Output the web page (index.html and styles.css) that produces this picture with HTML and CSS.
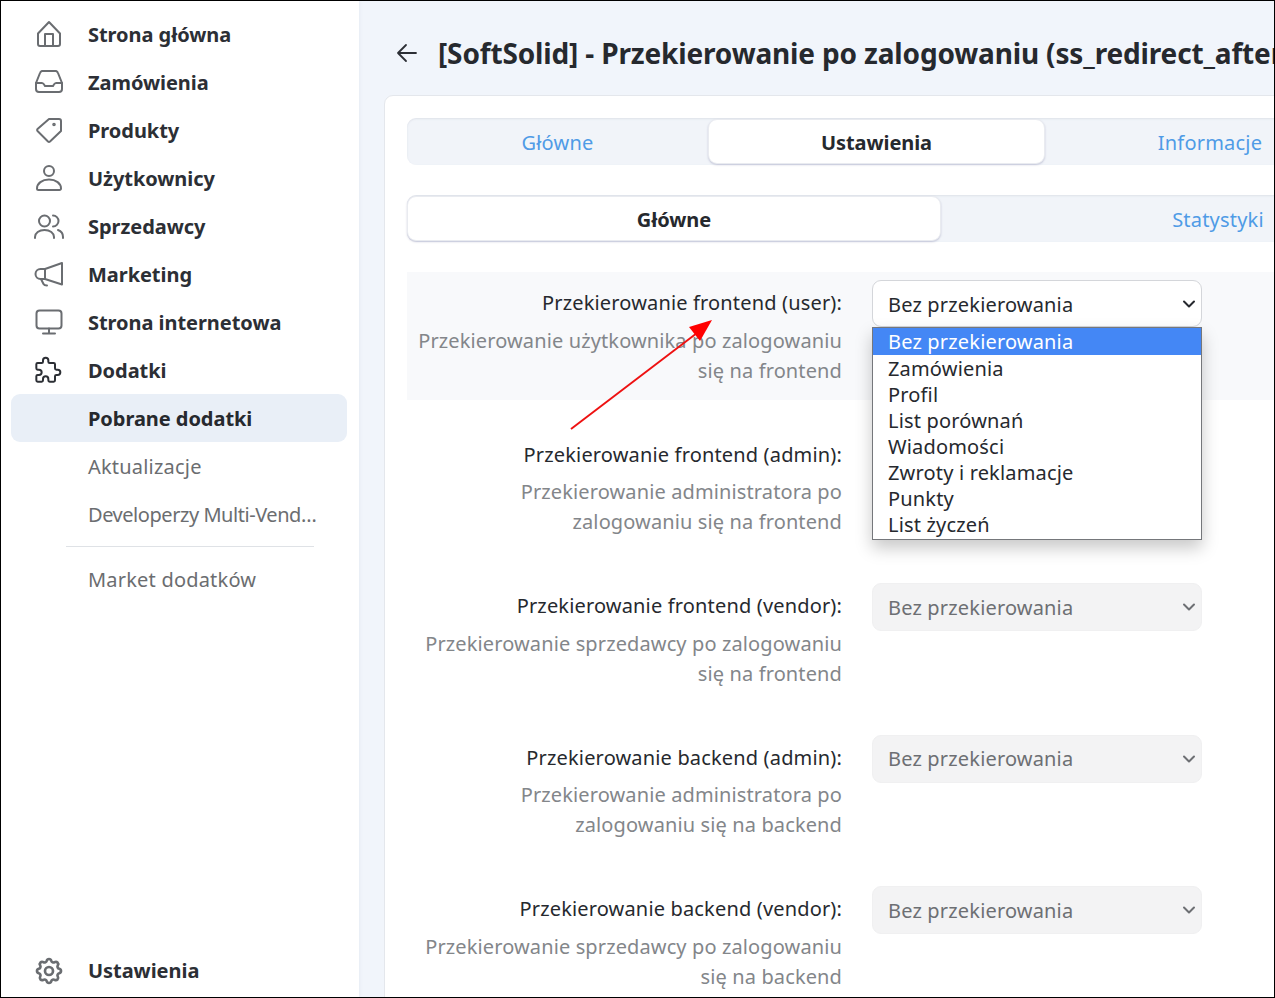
FILE: index.html
```html
<!DOCTYPE html>
<html lang="pl">
<head>
<meta charset="utf-8">
<title>Przekierowanie po zalogowaniu</title>
<link rel="stylesheet" href="styles.css">
</head>
<body>
<div class="frame">
  <aside class="sidebar">
    <nav class="nav">
      <a class="item"><svg class="ic" viewBox="0 0 32 32"><path d="M5 14.500 16 3l11 11.500V25a2 2 0 0 1-2 2H7a2 2 0 0 1-2-2Z"/><path d="M12 27V15h8v12"/></svg><span>Strona główna</span></a>
      <a class="item"><svg class="ic" viewBox="0 0 32 32"><path d="M3 16v6a3 3 0 0 0 3 3h20a3 3 0 0 0 3-3v-6L25 6a3 3 0 0 0-2-2H9a3 3 0 0 0-2 2Z"/><path d="M3 16h6c1.500 0 2 1 3 3h8c1-2 1.500-3 3-3h6"/></svg><span>Zamówienia</span></a>
      <a class="item"><svg class="ic" viewBox="0 0 32 32"><path d="M16 4h10a2 2 0 0 1 2 2v10L17 26.500a1.500 1.500 0 0 1-2 0L4.500 16a1.500 1.500 0 0 1 0-2Z"/><circle cx="21" cy="9.500" r=".8"/></svg><span>Produkty</span></a>
      <a class="item"><svg class="ic" viewBox="0 0 32 32"><circle cx="16" cy="8" r="5"/><path d="M4 25.500c0-5 5-9 12-9s12 4 12 9a1.500 1.500 0 0 1-1.500 1.500h-21A1.500 1.500 0 0 1 4 25.500Z"/></svg><span>Użytkownicy</span></a>
      <a class="item"><svg class="ic" viewBox="0 0 32 32"><circle cx="11.500" cy="10" r="5.500"/><path d="M20 4.500a5.500 5.500 0 0 1 0 11"/><path d="M2 27v-1c0-4 4-7 9.500-7s9.500 3 9.500 7v1"/><path d="M25 19c3 1 5 3.500 5 7v1"/></svg><span>Sprzedawcy</span></a>
      <a class="item"><svg class="ic" viewBox="0 0 32 32"><path d="M29 4 12 10H7.500a5 5 0 0 0 0 10H12l17 5.500Z"/><path d="M8 20l2.500 5c.5 1 1.500 1.500 3.500 1.500"/><path d="M12 10v10"/></svg><span>Marketing</span></a>
      <a class="item"><svg class="ic" viewBox="0 0 32 32"><rect x="3.500" y="3.500" width="25" height="18" rx="3"/><path d="M16 21.500V26M10 26.500h12"/></svg><span>Strona internetowa</span></a>
      <a class="item"><svg class="ic ic-dark" viewBox="0 0 24 24"><path transform="matrix(-1 0 0 1 24 0)" d="M11 4a2 2 0 1 1 4 0v1a1 1 0 0 0 1 1h3a1 1 0 0 1 1 1v3a1 1 0 0 1-1 1h-1a2 2 0 1 0 0 4h1a1 1 0 0 1 1 1v3a1 1 0 0 1-1 1h-3a1 1 0 0 1-1-1v-1a2 2 0 1 0-4 0v1a1 1 0 0 1-1 1H7a1 1 0 0 1-1-1v-3a1 1 0 0 0-1-1H4a2 2 0 1 1 0-4h1a1 1 0 0 0 1-1V7a1 1 0 0 1 1-1h3a1 1 0 0 0 1-1V4Z"/></svg><span>Dodatki</span></a>
      <a class="item active"><span>Pobrane dodatki</span></a>
      <a class="item sub"><span>Aktualizacje</span></a>
      <a class="item sub"><span class="clip">Developerzy Multi-Vendor</span></a>
      <hr class="rule">
      <a class="item sub"><span>Market dodatków</span></a>
    </nav>
    <a class="item"><svg class="ic" viewBox="0 0 24 24"><path d="M10.325 4.317c.426-1.756 2.924-1.756 3.350 0a1.724 1.724 0 0 0 2.573 1.066c1.543-.94 3.310.826 2.370 2.370a1.724 1.724 0 0 0 1.065 2.572c1.756.426 1.756 2.924 0 3.350a1.724 1.724 0 0 0-1.066 2.573c.94 1.543-.826 3.310-2.370 2.370a1.724 1.724 0 0 0-2.572 1.065c-.426 1.756-2.924 1.756-3.350 0a1.724 1.724 0 0 0-2.573-1.066c-1.543.94-3.310-.826-2.370-2.370a1.724 1.724 0 0 0-1.065-2.572c-1.756-.426-1.756-2.924 0-3.350a1.724 1.724 0 0 0 1.066-2.573c-.94-1.543.826-3.310 2.370-2.370.996.608 2.296.07 2.572-1.065Z"/><circle cx="12" cy="12" r="3"/></svg><span>Ustawienia</span></a>
  </aside>
  <main class="main">
    <header class="head">
      <svg class="back" viewBox="0 0 24 24"><path d="M21 12H3M11 4l-8 8 8 8"/></svg>
      <h1 class="title">[SoftSolid] - Przekierowanie po zalogowaniu (ss_redirect_after_login)</h1>
    </header>
    <section class="card">
      <div class="tabs tabs-top">
        <a class="tab">Główne</a>
        <a class="tab on">Ustawienia</a>
        <a class="tab">Informacje</a>
      </div>
      <div class="tabs tabs-sub">
        <a class="tab on">Główne</a>
        <a class="tab">Statystyki</a>
      </div>
      <div class="rows">
        <div class="row shaded">
          <div class="lbl"><div class="name">Przekierowanie frontend (user):</div><div class="help">Przekierowanie użytkownika po zalogowaniu<br>się na frontend</div></div>
          <div class="field">
            <div class="select">Bez przekierowania<svg class="chev" viewBox="0 0 16 16"><path d="M3 5.500l5 5 5-5"/></svg></div>
            <ul class="menu">
              <li class="hl">Bez przekierowania</li>
              <li>Zamówienia</li>
              <li>Profil</li>
              <li>List porównań</li>
              <li>Wiadomości</li>
              <li>Zwroty i reklamacje</li>
              <li>Punkty</li>
              <li>List życzeń</li>
            </ul>
          </div>
        </div>
        <div class="row">
          <div class="lbl"><div class="name">Przekierowanie frontend (admin):</div><div class="help">Przekierowanie administratora po<br>zalogowaniu się na frontend</div></div>
          <div class="field"></div>
        </div>
        <div class="row">
          <div class="lbl"><div class="name">Przekierowanie frontend (vendor):</div><div class="help">Przekierowanie sprzedawcy po zalogowaniu<br>się na frontend</div></div>
          <div class="field"><div class="select off">Bez przekierowania<svg class="chev" viewBox="0 0 16 16"><path d="M3 5.500l5 5 5-5"/></svg></div></div>
        </div>
        <div class="row">
          <div class="lbl"><div class="name">Przekierowanie backend (admin):</div><div class="help">Przekierowanie administratora po<br>zalogowaniu się na backend</div></div>
          <div class="field"><div class="select off">Bez przekierowania<svg class="chev" viewBox="0 0 16 16"><path d="M3 5.500l5 5 5-5"/></svg></div></div>
        </div>
        <div class="row">
          <div class="lbl"><div class="name">Przekierowanie backend (vendor):</div><div class="help">Przekierowanie sprzedawcy po zalogowaniu<br>się na backend</div></div>
          <div class="field"><div class="select off">Bez przekierowania<svg class="chev" viewBox="0 0 16 16"><path d="M3 5.500l5 5 5-5"/></svg></div></div>
        </div>
      </div>
    </section>
  </main>
  <svg class="annot" viewBox="0 0 1275 998"><path class="annot-line" d="M571 429 697 333"/><polygon class="annot-head" points="712,320 689,327 700,341"/></svg>
</div>
</body>
</html>
```
FILE: styles.css
```css
* { box-sizing: border-box; }
html, body { margin: 0; padding: 0; }
body { font-family: "Noto Sans", "Open Sans", sans-serif; color: #26292e; background: #fff; }
.frame { position: relative; width: 1275px; height: 998px; border: 1px solid #000; display: flex; overflow: hidden; background: #f1f5fb; }
.sidebar { width: 358px; flex: none; background: #fff; padding: 9px 11px 3px 10px; display: flex; flex-direction: column; justify-content: space-between; box-shadow: 1px 0 3px rgba(120,130,150,.08); position: relative; }
.nav { display: flex; flex-direction: column; }
.item { display: flex; align-items: center; height: 48px; padding-left: 77px; position: relative; font-size: 20px; font-weight: 700; letter-spacing: -.05px; color: #2c2f35; border-radius: 9px; white-space: nowrap; }
.item.active { background: #e9eff7; color: #26292e; width: 336px; }
.item.sub { font-weight: 400; color: #6b6d70; letter-spacing: .2px; }
.item.sub .clip { display: block; width: 231px; overflow: hidden; text-overflow: ellipsis; letter-spacing: -.45px; }
.rule { width: 248px; margin: 8px 0 8px 55px; height: 1px; border: 0; background: #dfe2e6; }
.ic { position: absolute; left: 22px; top: 9px; width: 32px; height: 32px; fill: none; stroke: #6a6d71; stroke-width: 2; stroke-linecap: round; stroke-linejoin: round; }
.ic-dark { left: 20px; stroke: #2c2f35; stroke-width: 1.500; }
.main { flex: 1; min-width: 0; padding: 0 0 0 25px; overflow: hidden; }
.head { height: 94px; display: flex; align-items: center; padding: 10px 0 0 11px; }
.back { width: 24px; height: 24px; flex: none; fill: none; stroke: #2c2f35; stroke-width: 1.800; stroke-linecap: round; stroke-linejoin: round; margin-right: 19px; }
.title { margin: 0; font-size: 28px; line-height: 36px; font-weight: 700; letter-spacing: -.15px; white-space: nowrap; color: #26292e; }
.card { width: 1000px; height: 1000px; background: #fff; border: 1px solid #e4e7ec; border-radius: 9px; padding: 22px; }
.tabs { display: grid; height: 47px; background: #f1f4f9; border-radius: 9px; box-shadow: inset 0 1px 2px rgba(120,130,150,.15); }
.tabs-top { grid-template-columns: 301px 337px 330px; width: 968px; }
.tabs-sub { grid-template-columns: 534px 554px; width: 1088px; margin-top: 30px; }
.tab { display: flex; align-items: center; justify-content: center; padding-top: 2px; font-size: 20px; letter-spacing: .2px; color: #4f9be6; }
.tab.on { background: #fff; color: #26292e; font-weight: 700; letter-spacing: -.08px; border-radius: 9px; border: 1px solid #e9ebf0; box-shadow: 0 1px 2px rgba(90,90,140,.3); margin: 1px 0; }
.rows { margin-top: 30px; display: flex; flex-direction: column; gap: 24px; }
.row { height: 127.500px; display: flex; gap: 30px; width: 868px; }
.row.shaded { background: #f8f9fb; }
.lbl { width: 435px; flex: none; text-align: right; padding-top: 16px; white-space: nowrap; font-size: 20px; line-height: 30px; letter-spacing: .12px; }
.name { color: #26292e; letter-spacing: .16px; }
.help { margin-top: 7.500px; color: #83868a; }
.field { position: relative; width: 330px; flex: none; padding-top: 8px; }
.select { position: relative; height: 47px; padding: 2px 15px 0; display: flex; align-items: center; font-size: 20px; line-height: 30px; letter-spacing: .17px; background: #fff; border: 1px solid #d4d6da; border-radius: 9px; color: #26292e; }
.select.off { background: #f3f3f4; border-color: #f0f0f1; color: #6d6f73; height: 48px; padding-top: 1px; }
.chev { position: absolute; right: 4px; top: 15px; width: 16px; height: 16px; fill: none; stroke: #26292e; stroke-width: 2; stroke-linecap: round; stroke-linejoin: round; }
.off .chev { stroke: #6d6f73; }
.menu { position: absolute; left: 0; top: 55px; width: 330px; height: 213px; margin: 0; padding: 0; list-style: none; background: #fff; border: 1px solid #75777b; font-size: 20px; line-height: 27px; letter-spacing: .17px; color: #26292e; box-shadow: 0 8px 16px rgba(0,0,0,.22); z-index: 2; }
.menu li { height: 26px; padding-left: 15px; }
.menu .hl { background: #4487f5; color: #fff; height: 27px; }
.annot { position: absolute; left: -1px; top: -1px; width: 1275px; height: 998px; pointer-events: none; z-index: 3; }
.annot-line { stroke: #ee1111; stroke-width: 2; fill: none; }
.annot-head { fill: #f00; }
```
